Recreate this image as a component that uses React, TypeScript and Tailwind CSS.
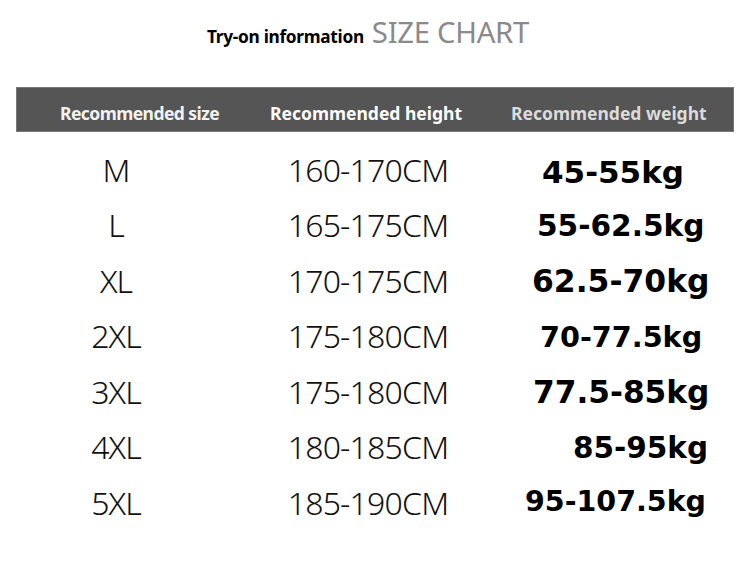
import React from "react";

const rows = [
  { size: "M", height: "160-170CM", weight: "45-55kg", cls: "pl-[22px] text-[31px] pt-[4px]" },
  { size: "L", height: "165-175CM", weight: "55-62.5kg", cls: "pl-[17px] text-[29.6px] pt-[2px]" },
  { size: "XL", height: "170-175CM", weight: "62.5-70kg", cls: "pl-[12px] text-[31.4px] pt-[2px]" },
  { size: "2XL", height: "175-180CM", weight: "70-77.5kg", cls: "pl-[20px] text-[28.7px] pt-[2px]" },
  { size: "3XL", height: "175-180CM", weight: "77.5-85kg", cls: "pl-[13px] text-[31.2px] pt-[2px]" },
  { size: "4XL", height: "180-185CM", weight: "85-95kg", cls: "pl-[53px] text-[29.5px] pt-[2px]" },
  { size: "5XL", height: "185-190CM", weight: "95-107.5kg", cls: "pl-[5px] text-[28.5px]" },
];

export default function App() {
  return (
    <div className="w-[750px] h-[566px] bg-white overflow-hidden font-['Noto_Sans',sans-serif]">
      <div className="flex items-baseline justify-center pt-[18px] h-[87px] pr-[14px]">
        <span className="text-[17.3px] font-bold text-black tracking-[-0.3px]">Try-on information</span>
        <span className="ml-[8px] text-[29.3px] text-[#8a8a8a] leading-none tracking-[-0.3px]">SIZE CHART</span>
      </div>
      <div className="mx-[16px] h-[45px] bg-[#555555] border border-[#777] flex items-center pt-[7px] text-[17.5px] font-bold">
        <span className="ml-[43px] w-[210px] text-[#f2f2f2] tracking-[-0.55px]">Recommended size</span>
        <span className="w-[241px] text-white">Recommended height</span>
        <span className="text-[#dcdcdc]">Recommended weight</span>
      </div>
      <div className="mx-[16px] mt-[10px] grid grid-cols-[200px_304px_1fr] auto-rows-[55.5px] items-center">
        {rows.map((r) => (
          <React.Fragment key={r.size}>
            <div className="text-center text-[32px] font-[350] text-[#111] tracking-[-1px]">{r.size}</div>
            <div className="text-center text-[32px] font-[350] text-[#111] tracking-[-0.8px]">{r.height}</div>
            <div className={`${r.cls} font-['DejaVu_Sans',sans-serif] font-bold text-black whitespace-nowrap`}>{r.weight}</div>
          </React.Fragment>
        ))}
      </div>
    </div>
  );
}
